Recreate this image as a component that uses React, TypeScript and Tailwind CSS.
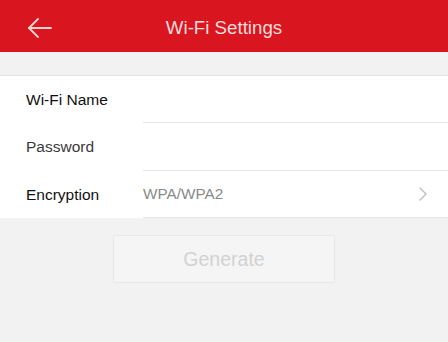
import React from "react";

export default function App() {
  return (
    <div
      className="w-[448px] h-[342px] bg-[#f2f2f2] flex flex-col"
      style={{ fontFamily: '"Helvetica Neue", "Liberation Sans", Arial, sans-serif' }}
    >
      <div className="h-[52px] bg-[#d9161f] flex items-center relative shrink-0">
        <div className="absolute left-[27px] top-[17px]">
          <svg width="25" height="22" viewBox="0 0 25 22" fill="none" stroke="#f6d3d3" strokeWidth="1.8" strokeLinecap="round" strokeLinejoin="round">
            <path d="M24 11H2" />
            <path d="M11 2L2 11l9 9" />
          </svg>
        </div>
        <div className="flex-1 text-center text-[18.7px] text-[#fbdcdc] leading-none pt-[4px]">Wi-Fi Settings</div>
      </div>
      <div className="h-[23px] shrink-0" />
      <div className="bg-white border-t border-[#e2e2e2] flex">
        <div className="w-[143px] shrink-0 flex flex-col">
          <div className="h-[47px] flex items-center pl-[26px] pt-[1px] text-[15.5px] text-[#111]">Wi-Fi Name</div>
          <div className="h-[48px] flex items-center pl-[26px] text-[15.5px] text-[#3a3a3a]">Password</div>
          <div className="h-[47px] flex items-center pl-[26px] pt-[1px] text-[15.5px] text-[#111]">Encryption</div>
        </div>
        <div className="flex-1 flex flex-col">
          <div className="h-[47px] border-b border-[#e6e6e6]" />
          <div className="h-[48px] border-b border-[#e6e6e6]" />
          <div className="h-[47px] border-b border-[#e6e6e6] flex items-center justify-between pr-[20px] text-[15.3px] text-[#8a8a8a]">
            <span>WPA/WPA2</span>
            <svg width="10" height="16" viewBox="0 0 10 16" fill="none" stroke="#bdbdbd" strokeWidth="1.4" strokeLinecap="round" strokeLinejoin="round">
              <path d="M2 2l6 6-6 6" />
            </svg>
          </div>
        </div>
      </div>
      <div className="flex justify-center pt-[17px]">
        <div className="w-[222px] h-[48px] bg-[#f5f5f5] border border-[#e8e8e8] rounded-[2px] flex items-center justify-center pt-[1px] text-[19.5px] text-[#d2d2d2]">
          Generate
        </div>
      </div>
    </div>
  );
}
